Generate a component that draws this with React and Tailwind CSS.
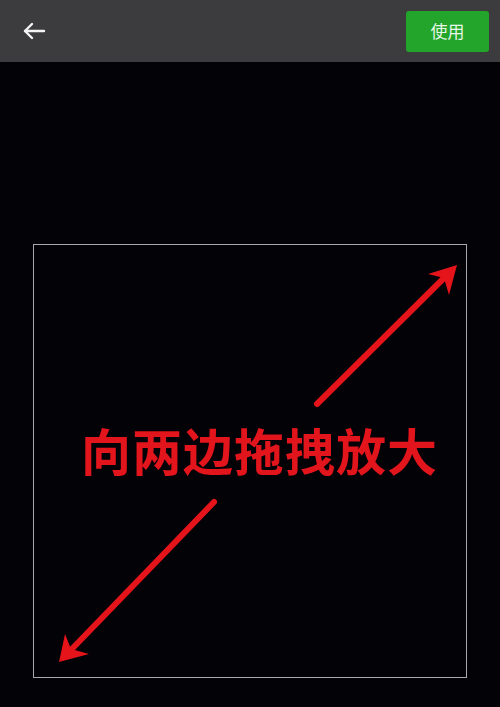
import React from "react";

const Arrow = ({ x1, y1, x2, y2, head }) => (
	<g>
		<line
			x1={x1}
			y1={y1}
			x2={x2}
			y2={y2}
			stroke="#e5141b"
			strokeWidth="6"
			strokeLinecap="round"
		/>
		<polygon points={head} fill="#e5141b" />
	</g>
);

const App = () => {
	return (
		<div
			className="w-[500px] h-[707px] flex flex-col bg-[#030207] overflow-hidden"
			style={{ fontFamily: '"Noto Sans CJK SC", "Noto Sans", sans-serif' }}
		>
			{/* Top bar */}
			<div className="h-[62px] bg-[#3c3c3e] flex items-center justify-between pl-[22px] pr-[11px]">
				<button className="w-[24px] h-[24px] flex items-center justify-center">
					<svg
						width="24"
						height="24"
						viewBox="0 0 24 24"
						fill="none"
						stroke="#f4f4f4"
						strokeWidth="2.4"
						strokeLinecap="round"
						strokeLinejoin="round"
					>
						<path d="M22 12H3" />
						<path d="M10 5l-7 7 7 7" />
					</svg>
				</button>
				<button className="w-[83px] h-[41px] rounded-[3px] bg-[#22a52a] text-[#e8f6e8] text-[17px] flex items-center justify-center">
					使用
				</button>
			</div>

			{/* Crop area */}
			<div className="flex-1 pt-[182px] px-[33px]">
				<div className="relative w-[434px] h-[434px] border border-[#a9a9ab] flex items-center justify-center pl-[19px] pb-[24px]">
					<svg
						className="absolute inset-0"
						width="434"
						height="434"
						viewBox="33 244 434 434"
					>
						<Arrow
							x1={316}
							y1={403}
							x2={446}
							y2={274}
							head="456,264 427,273 443,277 448,294"
						/>
						<Arrow
							x1={213}
							y1={501}
							x2={68}
							y2={651}
							head="58,661 64,633 70,648 88,653"
						/>
					</svg>
					<span className="relative text-[50px] leading-none font-bold text-[#e2141c] tracking-[1px] whitespace-nowrap">
						向两边拖拽放大
					</span>
				</div>
			</div>
		</div>
	);
};

export default App;
